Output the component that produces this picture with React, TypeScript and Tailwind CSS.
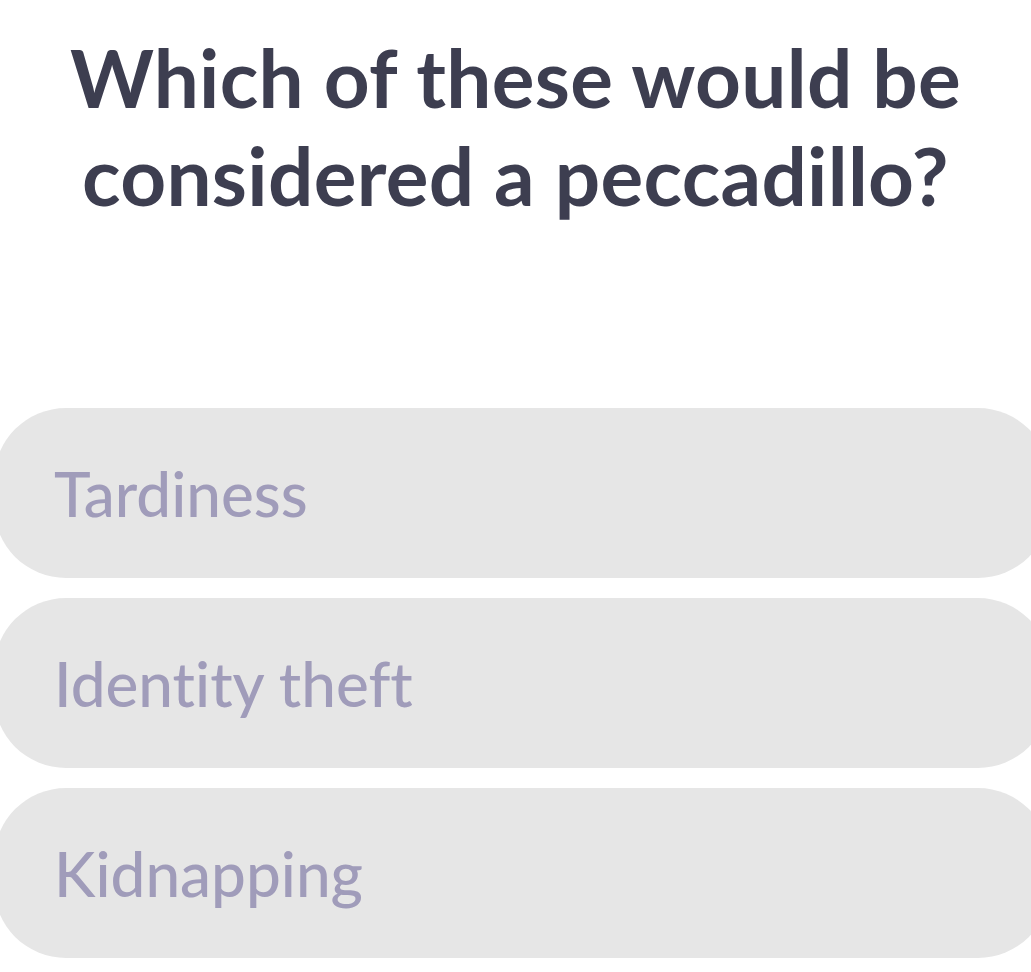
import React from "react";

const options = ["Tardiness", "Identity theft", "Kidnapping"];

export default function App() {
  return (
    <div
      className="w-[1031px] h-[972px] bg-white overflow-hidden flex flex-col [font-variant-ligatures:none]"
      style={{ fontFamily: "Lato, 'Noto Sans', sans-serif" }}
    >
      <h1 className="mt-[28px] text-center text-[80px] leading-[98px] font-bold text-[#3d3e50] tracking-[0.3px]">
        Which of these would be
        <br />
        considered a peccadillo?
      </h1>
      <div className="mt-[184px] flex flex-col gap-[20px] ml-[-6px]">
        {options.map((o) => (
          <div
            key={o}
            className="w-[1056px] h-[170px] rounded-[72px] bg-[#e6e6e6] flex items-center pl-[60px]"
          >
            <span className="text-[62px] leading-none font-medium text-[#a09cba]">{o}</span>
          </div>
        ))}
      </div>
    </div>
  );
}
